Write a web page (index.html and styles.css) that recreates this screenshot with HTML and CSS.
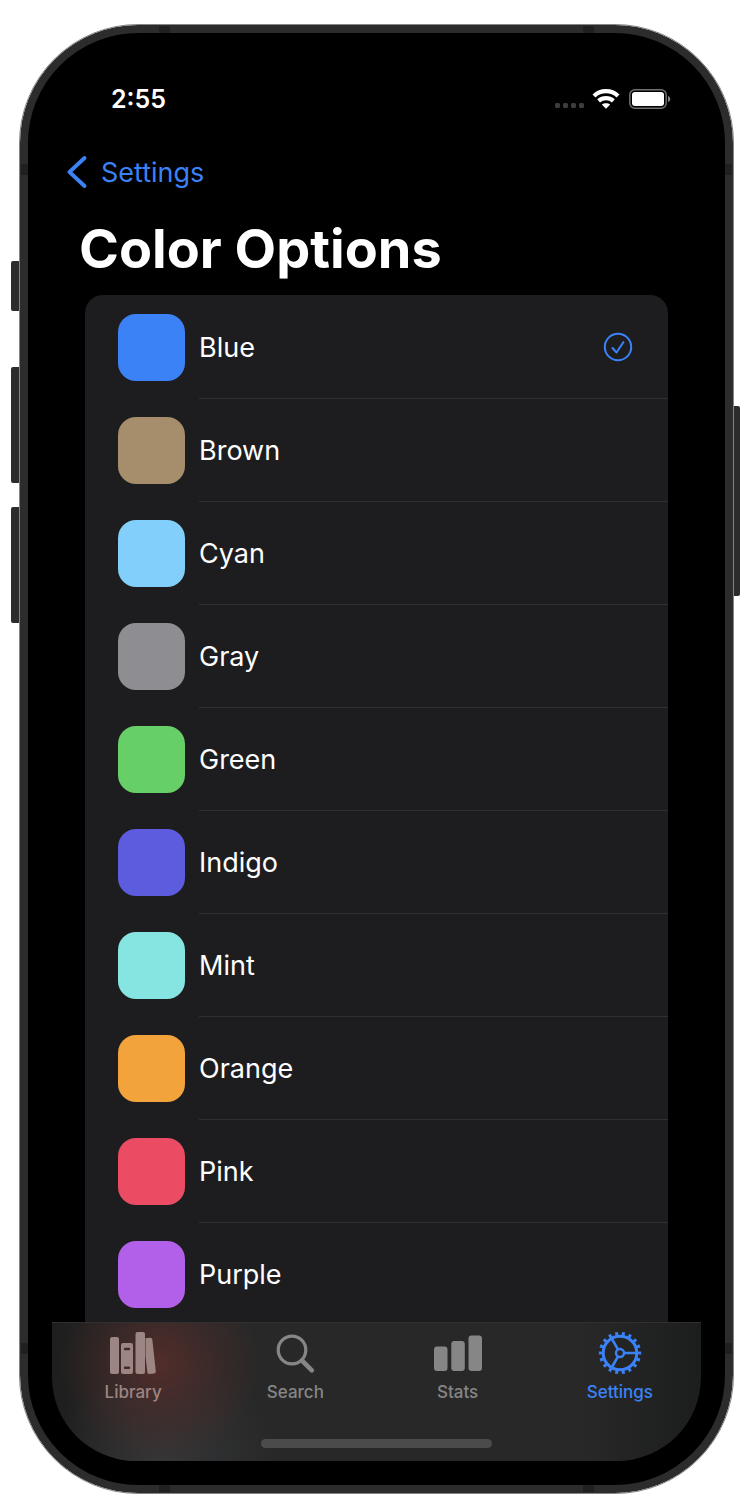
FILE: index.html
```html
<!DOCTYPE html>
<html lang="en">
<head>
<meta charset="utf-8">
<meta name="viewport" content="width=device-width, initial-scale=1">
<title>Color Options</title>
<link rel="stylesheet" href="styles.css">
</head>
<body>
<div class="phone">
  <span class="side-key side-key-mute"></span>
  <span class="side-key side-key-up"></span>
  <span class="side-key side-key-down"></span>
  <span class="side-key side-key-power"></span>
  <span class="band band-top band-start"></span>
  <span class="band band-top band-end"></span>
  <span class="band band-bottom band-start"></span>
  <span class="band band-bottom band-end"></span>
  <span class="band-side band-left band-upper"></span>
  <span class="band-side band-right band-upper"></span>
  <span class="band-side band-left band-lower"></span>
  <span class="band-side band-right band-lower"></span>
  <div class="screen">
    <header class="status">
      <time class="clock">2:55</time>
      <div class="status-icons">
        <svg class="signal" width="29" height="20" viewBox="0 0 29 20" fill="#3d3d3d" aria-hidden="true"><rect x="0" y="14" width="5" height="5" rx="1.5"/><rect x="8" y="14" width="5" height="5" rx="1.5"/><rect x="16" y="14" width="5" height="5" rx="1.5"/><rect x="24" y="14" width="5" height="5" rx="1.5"/></svg>
        <svg width="28" height="20" viewBox="0 0 28 20" fill="none" stroke="#fff" stroke-width="4.200" aria-hidden="true"><path d="M2 7C8.700.6 19.300.6 26 7"/><path d="M6.600 11.900c4.200-3.700 10.600-3.700 14.800 0"/><path d="M14 19.800l-4.200-4.200c2.300-1.900 6.100-1.900 8.400 0z" fill="#fff" stroke="none"/></svg>
        <svg class="battery" width="42" height="20" viewBox="0 0 42 20" aria-hidden="true"><rect x=".8" y=".8" width="36.400" height="18.400" rx="5" fill="none" stroke="#707070" stroke-width="1.500"/><rect x="3" y="3" width="32" height="14" rx="3" fill="#fff"/><path d="M39 7c3 1 3 5 0 6z" fill="#858585"/></svg>
      </div>
    </header>
    <nav class="navbar">
      <a class="back" href="#settings">
        <svg width="20" height="32" viewBox="0 0 20 32" fill="none" stroke="currentColor" stroke-width="3.800" stroke-linecap="round" stroke-linejoin="round" aria-hidden="true"><path d="M17.500 2 2.500 16l15 14"/></svg>
        Settings
      </a>
    </nav>
    <h1 class="title">Color Options</h1>
    <main class="content">
      <ul class="options">
        <li><button class="option" aria-pressed="true"><span class="swatch blue"></span><span class="name">Blue
          <svg width="30" height="30" viewBox="0 0 30 30" fill="none" stroke="#3b82f7" stroke-width="2" stroke-linecap="round" stroke-linejoin="round" aria-hidden="true"><circle cx="15" cy="15" r="13.200"/><path d="m9.500 16 4 4.500 7-10.500"/></svg></span></button></li>
        <li><button class="option"><span class="swatch brown"></span><span class="name">Brown</span></button></li>
        <li><button class="option"><span class="swatch cyan"></span><span class="name">Cyan</span></button></li>
        <li><button class="option"><span class="swatch gray"></span><span class="name">Gray</span></button></li>
        <li><button class="option"><span class="swatch green"></span><span class="name">Green</span></button></li>
        <li><button class="option"><span class="swatch indigo"></span><span class="name">Indigo</span></button></li>
        <li><button class="option"><span class="swatch mint"></span><span class="name">Mint</span></button></li>
        <li><button class="option"><span class="swatch orange"></span><span class="name">Orange</span></button></li>
        <li><button class="option"><span class="swatch pink"></span><span class="name">Pink</span></button></li>
        <li><button class="option"><span class="swatch purple"></span><span class="name">Purple</span></button></li>
      </ul>
    </main>
    <footer class="tabbar">
      <nav class="tabs">
        <a class="tab tab-library" href="#library">
          <svg width="46" height="44" viewBox="0 0 46 44" fill="currentColor" aria-hidden="true"><rect x="0" y="6" width="9" height="37" rx="2"/><path fill-rule="evenodd" d="M13 12h8a2 2 0 0 1 2 2v27a2 2 0 0 1-2 2h-8a2 2 0 0 1-2-2V14a2 2 0 0 1 2-2zm2 4.800a1.200 1.200 0 0 0 0 2.400h4a1.200 1.200 0 0 0 0-2.400zm0 18.800a1.200 1.200 0 0 0 0 2.400h4a1.200 1.200 0 0 0 0-2.400z"/><rect x="25.500" y="1" width="9.500" height="42" rx="2"/><path d="m35.500 7.200 4.600-.5a2 2 0 0 1 2.200 1.700l3.500 31.900a2 2 0 0 1-1.700 2.200l-4.600.5a2 2 0 0 1-2.200-1.700L35.500 25z"/></svg>
          Library</a>
        <a class="tab" href="#search">
          <svg width="46" height="44" viewBox="0 0 46 44" fill="none" stroke="currentColor" aria-hidden="true"><circle cx="20" cy="19" r="13.800" stroke-width="3.200"/><path d="m30 29.500 9.800 9.800" stroke-width="4.600" stroke-linecap="round"/></svg>
          Search</a>
        <a class="tab" href="#stats">
          <svg width="50" height="44" viewBox="0 0 50 44" fill="currentColor" aria-hidden="true"><rect x="1" y="15.500" width="13.500" height="24.500" rx="3"/><rect x="18.300" y="10" width="13.500" height="30" rx="3"/><rect x="35.500" y="4.500" width="13.500" height="35.500" rx="3"/></svg>
          Stats</a>
        <a class="tab active" href="#settings-tab" aria-current="page">
          <svg width="46" height="44" viewBox="0 0 46 44" fill="none" stroke="currentColor" aria-hidden="true"><circle cx="23" cy="22" r="16.800" stroke-width="3"/><circle cx="23" cy="22" r="19" stroke-width="4.400" pathLength="180" stroke-dasharray="4.400 5.600" stroke-dashoffset="2.200"/><circle cx="23" cy="22" r="4" stroke-width="2.400"/><path stroke-width="2.600" d="M27.500 22H39M20.800 18.100 15 8M20.800 25.900 15 36"/></svg>
          Settings</a>
      </nav>
      <span class="home"></span>
    </footer>
  </div>
</div>
</body>
</html>
```
FILE: styles.css
```css
* { box-sizing: border-box; }

body {
  margin: 0;
  height: 100vh;
  padding: 25px 19px 5px 20px;
  background: #fff;
  color: #fff;
  font-family: Inter, "Liberation Sans", sans-serif;
}

.phone {
  position: relative;
  height: 100%;
  padding: 24px;
  border: 8px solid #2c2c2c;
  border-radius: 118px;
  background: #000;
  outline: 1px solid #858585;
}

.side-key {
  position: absolute;
  width: 8px;
  left: -17px;
  background: #2c2c2c;
  border-radius: 2px 0 0 2px;
}
.side-key-mute { top: 228px; height: 50px; }
.side-key-up { top: 334px; height: 116px; }
.side-key-down { top: 474px; height: 116px; }
.side-key-power {
  top: 373px;
  height: 190px;
  left: auto;
  right: -15px;
  width: 6px;
  border-radius: 0 2px 2px 0;
}

.band { position: absolute; width: 11px; height: 7px; background: #202020; }
.band-top { top: -7px; }
.band-bottom { bottom: -7px; }
.band-start { left: 131px; }
.band-end { right: 131px; }
.band-side { position: absolute; width: 7px; height: 11px; background: #202020; }
.band-left { left: -7px; }
.band-right { right: -7px; }
.band-upper { top: 131px; }
.band-lower { bottom: 131px; }

.screen {
  height: 100%;
  display: flex;
  flex-direction: column;
  overflow: hidden;
  border-radius: 84px;
}

.status {
  height: 84px;
  flex: none;
  display: flex;
  align-items: center;
  justify-content: space-between;
  padding: 0 30px 0 59px;
}
.clock { font-size: 25px; font-weight: 600; }
.status-icons { display: flex; align-items: center; gap: 9px; }
.signal { margin-right: -1px; }

.navbar {
  height: 62px;
  flex: none;
  display: flex;
  align-items: center;
  padding-left: 15px;
}
.back {
  display: flex;
  align-items: center;
  gap: 14px;
  color: #3b82f7;
  font-size: 27px;
  text-decoration: none;
}

.title {
  flex: none;
  margin: 0;
  padding-left: 27px;
  font-size: 54px;
  font-weight: 700;
  line-height: 92px;
}

.content { flex: 1; min-height: 0; overflow: hidden; padding: 0 33px; }

.options {
  list-style: none;
  margin: 0;
  padding: 1px 0 0;
  background: #1d1d1f;
  border-radius: 18px 18px 0 0;
}

.option {
  display: flex;
  align-items: center;
  gap: 14px;
  width: 100%;
  height: 103px;
  padding: 0 0 0 33px;
  border: 0;
  background: none;
  color: #fff;
  font: inherit;
  font-size: 27px;
  text-align: left;
}
.name {
  flex: 1;
  align-self: stretch;
  display: flex;
  align-items: center;
  justify-content: space-between;
  padding-right: 35px;
  border-bottom: 1px solid #303032;
}
li:last-child .name { border-bottom: 0; }

.swatch { width: 67px; height: 67px; border-radius: 18px; }
.blue { background: #3b82f7; }
.brown { background: #a68e6d; }
.cyan { background: #81cffa; }
.gray { background: #8e8d92; }
.green { background: #67cf68; }
.indigo { background: #5d5bde; }
.mint { background: #87e5e1; }
.orange { background: #f2a33c; }
.pink { background: #eb4b63; }
.purple { background: #b260ea; }

.tabbar {
  flex: none;
  height: 139px;
  display: flex;
  flex-direction: column;
  align-items: center;
  justify-content: space-between;
  padding: 8px 0 13px;
  border-top: 1px solid #303030;
  background:
    radial-gradient(ellipse 100px 105px at 108px 41px, #512d2a 0, #4a2c2a99 45%, #38292900 100%),
    radial-gradient(circle 110px at 112px 139px, #343638 0, #34363800 100%),
    linear-gradient(90deg, #1e1e1e 0, #282828 130px, #282828 530px, #1c1d1d 100%);
}
.tabs { display: flex; width: 100%; }
.tab {
  flex: 1;
  display: flex;
  flex-direction: column;
  align-items: center;
  gap: 6px;
  color: #868686;
  font-size: 17px;
  font-weight: 500;
  line-height: 22px;
  text-decoration: none;
}
.tab-library { color: #9c8583; }
.active { color: #3b82f7; }
.home { width: 231px; height: 9px; border-radius: 5px; background: #4b4b4b; }
```
